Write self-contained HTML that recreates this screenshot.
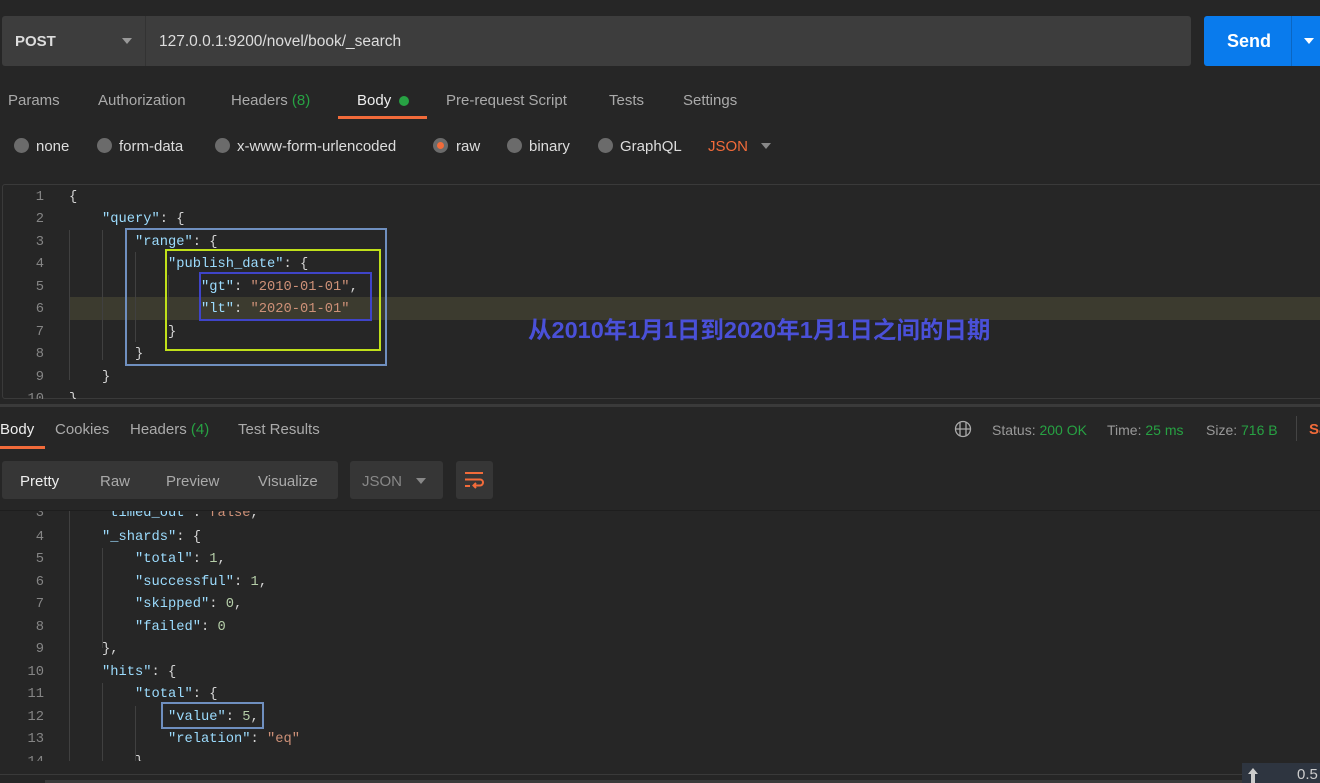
<!DOCTYPE html>
<html><head><meta charset="utf-8"><style>
*{margin:0;padding:0;box-sizing:border-box}
body{width:1320px;height:783px;background:#262626;font-family:"Liberation Sans","Noto Sans CJK SC",sans-serif;color:#ccc;position:relative;overflow:hidden;font-size:15px}
.a{position:absolute;white-space:nowrap}
.code{font-family:"Liberation Mono",monospace;font-size:13.75px}
.k{color:#9cdcfe}.s{color:#ce9178}.n{color:#b5cea8}.p{color:#d4d4d4}
.ln{position:absolute;width:44px;text-align:right;color:#858585;font-family:"Liberation Mono",monospace;font-size:13.75px}
.g{position:absolute;width:1px;background:#404040}
.rad{position:absolute;width:15px;height:15px;border-radius:50%;background:#6b6b6b}
.ed .a,.ed .ln{margin-top:3px}
.rs .a.code,.rs .ln{margin-top:2px}
.t{margin-top:1px}
</style></head><body>
<div class="a" style="left:2px;top:16px;width:1189px;height:50px;background:#3d3d3d;border-radius:3px"></div>
<div class="a" style="left:145px;top:16px;width:1px;height:50px;background:#333"></div>
<div class="a" style="left:15px;top:33px;font-weight:bold;color:#ddd;font-size:15px">POST</div>
<div class="a" style="left:122px;top:38px;border-left:5px solid transparent;border-right:5px solid transparent;border-top:6px solid #999"></div>
<div class="a" style="left:159px;top:33px;color:#ddd;font-size:15.5px">127.0.0.1:9200/novel/book/_search</div>
<div class="a" style="left:1204px;top:16px;width:120px;height:50px;background:#097bed;border-radius:3px"></div>
<div class="a" style="left:1291px;top:16px;width:1px;height:50px;background:#0a66c2"></div>
<div class="a" style="left:1227px;top:31px;color:#fff;font-weight:bold;font-size:18px">Send</div>
<div class="a" style="left:1304px;top:38px;border-left:5px solid transparent;border-right:5px solid transparent;border-top:6px solid #fff"></div>
<div class="a" style="left:8px;top:92px;color:#aaa">Params</div>
<div class="a" style="left:98px;top:92px;color:#aaa">Authorization</div>
<div class="a" style="left:231px;top:92px;color:#aaa">Headers <span style="color:#27a243">(8)</span></div>
<div class="a" style="left:357px;top:92px;color:#eee">Body</div>
<div class="a" style="left:399px;top:96px;width:10px;height:10px;border-radius:50%;background:#27a243"></div>
<div class="a" style="left:338px;top:116px;width:89px;height:3px;background:#f26b3a"></div>
<div class="a" style="left:446px;top:92px;color:#aaa">Pre-request Script</div>
<div class="a" style="left:609px;top:92px;color:#aaa">Tests</div>
<div class="a" style="left:683px;top:92px;color:#aaa">Settings</div>
<div class="rad" style="left:14px;top:138px"></div><div class="a" style="left:36px;top:138px;color:#ddd">none</div>
<div class="rad" style="left:97px;top:138px"></div><div class="a" style="left:119px;top:138px;color:#ddd">form-data</div>
<div class="rad" style="left:215px;top:138px"></div><div class="a" style="left:237px;top:138px;color:#ddd">x-www-form-urlencoded</div>
<div class="rad" style="left:433px;top:138px"></div><div class="a" style="left:437px;top:142px;width:7px;height:7px;border-radius:50%;background:#f26b3a"></div><div class="a" style="left:456px;top:138px;color:#ddd">raw</div>
<div class="rad" style="left:507px;top:138px"></div><div class="a" style="left:529px;top:138px;color:#ddd">binary</div>
<div class="rad" style="left:598px;top:138px"></div><div class="a" style="left:620px;top:138px;color:#ddd">GraphQL</div>
<div class="a" style="left:708px;top:138px;color:#f26b3a">JSON</div>
<div class="a" style="left:761px;top:143px;border-left:5px solid transparent;border-right:5px solid transparent;border-top:6px solid #888"></div>
<div class="a" style="left:2px;top:184px;width:1330px;height:215px;border:1px solid #3a3a3a;border-radius:3px"></div>
<div class="a" style="left:69px;top:297px;width:1251px;height:23px;background:#3c3b2f"></div>
<div class="a" style="left:0;top:404px;width:1320px;height:3px;background:#3a3a3a"></div>
<div class="g" style="left:69px;top:230px;height:150px"></div>
<div class="g" style="left:102px;top:230px;height:130px"></div>
<div class="g" style="left:135px;top:252px;height:90px"></div>
<div class="g" style="left:168px;top:275px;height:45px"></div>
<div class="ed">
<div class="ln" style="top:187px">1</div><div class="ln" style="top:209px">2</div><div class="ln" style="top:232px">3</div><div class="ln" style="top:254px">4</div><div class="ln" style="top:277px">5</div><div class="ln" style="top:299px">6</div><div class="ln" style="top:322px">7</div><div class="ln" style="top:344px">8</div><div class="ln" style="top:367px">9</div><div class="ln" style="top:389px;height:7px;overflow:hidden">10</div>
<div class="a code p" style="left:69px;top:187px">{</div>
<div class="a code" style="left:102px;top:209px"><span class="k">"query"</span><span class="p">: {</span></div>
<div class="a code" style="left:135px;top:232px"><span class="k">"range"</span><span class="p">: {</span></div>
<div class="a code" style="left:168px;top:254px"><span class="k">"publish_date"</span><span class="p">: {</span></div>
<div class="a code" style="left:201px;top:277px"><span class="k">"gt"</span><span class="p">: </span><span class="s">"2010-01-01"</span><span class="p">,</span></div>
<div class="a code" style="left:201px;top:299px"><span class="k">"lt"</span><span class="p">: </span><span class="s">"2020-01-01"</span></div>
<div class="a code p" style="left:168px;top:322px">}</div>
<div class="a code p" style="left:135px;top:344px">}</div>
<div class="a code p" style="left:102px;top:367px">}</div>
<div class="a code p" style="left:69px;top:389px;height:7px;overflow:hidden">}</div>
</div>
<div class="a" style="left:125px;top:228px;width:262px;height:138px;border:2px solid #6f8fbf"></div>
<div class="a" style="left:165px;top:249px;width:216px;height:102px;border:2px solid #c0e01a"></div>
<div class="a" style="left:199px;top:272px;width:173px;height:49px;border:2px solid #3f44c8"></div>
<div class="a" style="left:528px;top:311px;color:#4a50d8;font-weight:bold;font-size:23.5px;font-family:'Liberation Sans','Noto Sans CJK SC',sans-serif">从2010年1月1日到2020年1月1日之间的日期</div>
<div class="a" style="left:0;top:421px;color:#eee">Body</div>
<div class="a" style="left:0;top:446px;width:45px;height:3px;background:#f26b3a"></div>
<div class="a" style="left:55px;top:421px;color:#aaa">Cookies</div>
<div class="a" style="left:130px;top:421px;color:#aaa">Headers <span style="color:#27a243">(4)</span></div>
<div class="a" style="left:238px;top:421px;color:#aaa">Test Results</div>
<svg class="a" style="left:954px;top:420px" width="18" height="18" viewBox="0 0 18 18" fill="none" stroke="#aaa" stroke-width="1.3"><circle cx="9" cy="9" r="7.5"/><path d="M1.5 9h15M6 2.5v13M12 2.5v13"/></svg>
<div class="a" style="left:992px;top:422px;font-size:14px;color:#999">Status: <span style="color:#27a243">200 OK</span></div>
<div class="a" style="left:1107px;top:422px;font-size:14px;color:#999">Time: <span style="color:#27a243">25 ms</span></div>
<div class="a" style="left:1206px;top:422px;font-size:14px;color:#999">Size: <span style="color:#27a243">716 B</span></div>
<div class="a" style="left:1296px;top:416px;width:1px;height:25px;background:#444"></div>
<div class="a" style="left:1309px;top:421px;color:#f26b3a;font-weight:bold">Sa</div>
<div class="a" style="left:2px;top:461px;width:336px;height:38px;background:#363636;border-radius:3px"></div>
<div class="a" style="left:20px;top:473px;color:#eee">Pretty</div>
<div class="a" style="left:100px;top:473px;color:#aaa">Raw</div>
<div class="a" style="left:166px;top:473px;color:#aaa">Preview</div>
<div class="a" style="left:258px;top:473px;color:#aaa">Visualize</div>
<div class="a" style="left:350px;top:461px;width:93px;height:38px;background:#363636;border-radius:3px"></div>
<div class="a" style="left:362px;top:473px;color:#888">JSON</div>
<div class="a" style="left:416px;top:478px;border-left:5px solid transparent;border-right:5px solid transparent;border-top:6px solid #888"></div>
<div class="a" style="left:456px;top:461px;width:37px;height:38px;background:#363636;border-radius:3px"></div>
<svg class="a" style="left:463px;top:470px" width="22" height="20" viewBox="0 0 22 20" fill="none" stroke="#f26b3a" stroke-width="2"><path d="M2 3h18M2 9.5h15a3 3 0 0 1 0 6h-6M13 13l-2.5 2.5L13 18M2 16h5"/></svg>
<div class="a" style="left:0;top:510px;width:1320px;height:1px;background:#1e1e1e"></div>
<div class="a rs" style="left:0;top:511px;width:1320px;height:250px;overflow:hidden">
<div class="g" style="left:69px;top:0;height:250px"></div>
<div class="g" style="left:102px;top:37px;height:100px"></div>
<div class="g" style="left:102px;top:172px;height:80px"></div>
<div class="g" style="left:135px;top:195px;height:55px"></div>
<div class="ln" style="top:-7px">3</div><div class="ln" style="top:17px">4</div><div class="ln" style="top:39px">5</div><div class="ln" style="top:62px">6</div><div class="ln" style="top:84px">7</div><div class="ln" style="top:107px">8</div><div class="ln" style="top:129px">9</div><div class="ln" style="top:152px">10</div><div class="ln" style="top:174px">11</div><div class="ln" style="top:197px">12</div><div class="ln" style="top:219px">13</div><div class="ln" style="top:242px">14</div>
<div class="a code" style="left:102px;top:-7px"><span class="k">"timed_out"</span><span class="p">: </span><span class="s">false</span><span class="p">,</span></div>
<div class="a code" style="left:102px;top:17px"><span class="k">"_shards"</span><span class="p">: {</span></div>
<div class="a code" style="left:135px;top:39px"><span class="k">"total"</span><span class="p">: </span><span class="n">1</span><span class="p">,</span></div>
<div class="a code" style="left:135px;top:62px"><span class="k">"successful"</span><span class="p">: </span><span class="n">1</span><span class="p">,</span></div>
<div class="a code" style="left:135px;top:84px"><span class="k">"skipped"</span><span class="p">: </span><span class="n">0</span><span class="p">,</span></div>
<div class="a code" style="left:135px;top:107px"><span class="k">"failed"</span><span class="p">: </span><span class="n">0</span></div>
<div class="a code p" style="left:102px;top:129px">},</div>
<div class="a code" style="left:102px;top:152px"><span class="k">"hits"</span><span class="p">: {</span></div>
<div class="a code" style="left:135px;top:174px"><span class="k">"total"</span><span class="p">: {</span></div>
<div class="a code" style="left:168px;top:197px"><span class="k">"value"</span><span class="p">: </span><span class="n">5</span><span class="p">,</span></div>
<div class="a code" style="left:168px;top:219px"><span class="k">"relation"</span><span class="p">: </span><span class="s">"eq"</span></div>
<div class="a code p" style="left:135px;top:242px">}</div>
<div class="a" style="left:161px;top:191px;width:103px;height:27px;border:2px solid #6f8fbf"></div>
</div>
<div class="a" style="left:0;top:774px;width:1245px;height:1px;background:#3a3a3a"></div>
<div class="a" style="left:45px;top:780px;width:1200px;height:3px;background:#3a3a3a"></div>
<div class="a" style="left:1242px;top:763px;width:78px;height:20px;background:#2e3540"></div>
<div class="a" style="left:1248px;top:768px;border-left:5px solid transparent;border-right:5px solid transparent;border-bottom:6px solid #ccc"></div>
<div class="a" style="left:1251px;top:773px;width:4px;height:10px;background:#ccc"></div>
<div class="a" style="left:1297px;top:766px;color:#ccc;font-size:15px">0.5</div>
</body></html>
